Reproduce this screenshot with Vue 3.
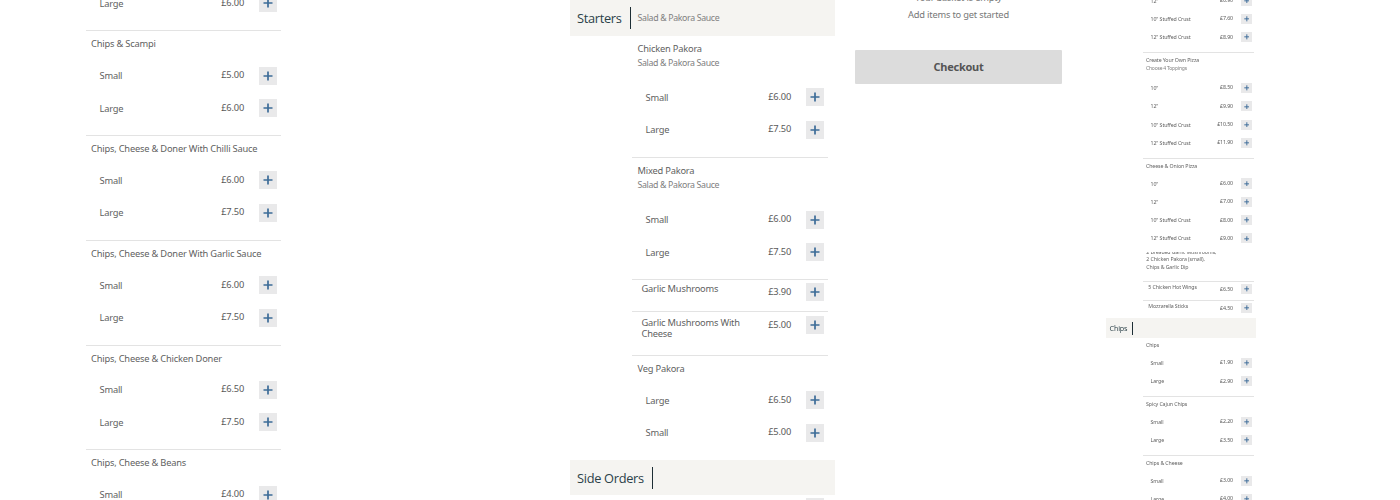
<template>
  <div class="page">
    <section v-for="col in columns" :key="col.id" class="col" :class="col.id">
      <template v-for="(item, i) in col.items" :key="i">
        <header v-if="item.head" class="head">
          <h2 class="head-title">{{ item.head }}</h2>
          <span v-if="item.sub" class="head-sub">{{ item.sub }}</span>
        </header>

        <div v-else-if="item.lines" class="deal">
          <p v-for="line in item.lines" :key="line">{{ line }}</p>
        </div>

        <div v-else-if="item.price" class="item single" :class="{ bare: item.bare, tall: item.tall }">
          <span class="single-name">{{ item.name }}</span>
          <span class="price">{{ item.price }}</span>
          <button class="add"><svg viewBox="0 0 10 10" width="10" height="10"><path d="M5 .5v9M.5 5h9" /></svg></button>
        </div>

        <div v-else class="item" :class="{ bare: item.bare }">
          <h3 v-if="item.name" class="name">{{ item.name }}</h3>
          <p v-if="item.sub" class="sub">{{ item.sub }}</p>
          <div v-for="row in item.rows" :key="row[0]" class="row">
            <span class="label">{{ row[0] }}</span>
            <span class="price">{{ row[1] }}</span>
            <button class="add"><svg viewBox="0 0 10 10" width="10" height="10"><path d="M5 .5v9M.5 5h9" /></svg></button>
          </div>
        </div>
      </template>
    </section>

    <aside class="cart">
      <p class="cart-title">Your basket is empty</p>
      <p class="cart-hint">Add items to get started</p>
      <button class="checkout">Checkout</button>
    </aside>

    <section class="col mini">
      <template v-for="(item, i) in miniItems" :key="i">
        <header v-if="item.head" class="head">
          <h2 class="head-title">{{ item.head }}</h2>
        </header>
        <div v-else-if="item.lines" class="deal">
          <p v-for="line in item.lines" :key="line">{{ line }}</p>
        </div>
        <div v-else-if="item.price" class="item single">
          <span class="single-name">{{ item.name }}</span>
          <span class="price">{{ item.price }}</span>
          <button class="add"><svg viewBox="0 0 10 10" width="10" height="10"><path d="M5 .5v9M.5 5h9" /></svg></button>
        </div>
        <div v-else class="item" :class="{ bare: item.bare }">
          <h3 v-if="item.name" class="name">{{ item.name }}</h3>
          <p v-if="item.sub" class="sub">{{ item.sub }}</p>
          <div v-for="row in item.rows" :key="row[0]" class="row">
            <span class="label">{{ row[0] }}</span>
            <span class="price">{{ row[1] }}</span>
            <button class="add"><svg viewBox="0 0 10 10" width="10" height="10"><path d="M5 .5v9M.5 5h9" /></svg></button>
          </div>
        </div>
      </template>
    </section>
  </div>
</template>

<script setup>
const columns = [
  {
    id: 'left',
    items: [
      { bare: true, rows: [['Large', '£6.00']] },
      { name: 'Chips & Scampi', rows: [['Small', '£5.00'], ['Large', '£6.00']] },
      { name: 'Chips, Cheese & Doner With Chilli Sauce', rows: [['Small', '£6.00'], ['Large', '£7.50']] },
      { name: 'Chips, Cheese & Doner With Garlic Sauce', rows: [['Small', '£6.00'], ['Large', '£7.50']] },
      { name: 'Chips, Cheese & Chicken Doner', rows: [['Small', '£6.50'], ['Large', '£7.50']] },
      { name: 'Chips, Cheese & Beans', rows: [['Small', '£4.00'], ['Large', '£5.00']] },
    ],
  },
  {
    id: 'middle',
    items: [
      { head: 'Starters', sub: 'Salad & Pakora Sauce' },
      { bare: true, name: 'Chicken Pakora', sub: 'Salad & Pakora Sauce', rows: [['Small', '£6.00'], ['Large', '£7.50']] },
      { name: 'Mixed Pakora', sub: 'Salad & Pakora Sauce', rows: [['Small', '£6.00'], ['Large', '£7.50']] },
      { name: 'Garlic Mushrooms', price: '£3.90' },
      { name: 'Garlic Mushrooms With Cheese', price: '£5.00', tall: true },
      { name: 'Veg Pakora', rows: [['Large', '£6.50'], ['Small', '£5.00']] },
      { head: 'Side Orders' },
      { bare: true, name: 'Onion Rings', price: '£2.50' },
    ],
  },
]

const miniItems = [
  { bare: true, rows: [['12"', '£6.90'], ['10" Stuffed Crust', '£7.60'], ['12" Stuffed Crust', '£8.90']] },
  { name: 'Create Your Own Pizza', sub: 'Choose 4 Toppings', rows: [['10"', '£8.50'], ['12"', '£9.90'], ['10" Stuffed Crust', '£10.50'], ['12" Stuffed Crust', '£11.90']] },
  { name: 'Cheese & Onion Pizza', rows: [['10"', '£6.00'], ['12"', '£7.00'], ['10" Stuffed Crust', '£8.00'], ['12" Stuffed Crust', '£9.00']] },
  { lines: ['2 Breaded Garlic Mushrooms,', '2 Chicken Pakora (small),', 'Chips & Garlic Dip'] },
  { name: '5 Chicken Hot Wings', price: '£6.50' },
  { name: 'Mozzarella Sticks', price: '£4.50' },
  { head: 'Chips' },
  { bare: true, name: 'Chips', rows: [['Small', '£1.90'], ['Large', '£2.90']] },
  { name: 'Spicy Cajun Chips', rows: [['Small', '£2.20'], ['Large', '£3.50']] },
  { name: 'Chips & Cheese', rows: [['Small', '£3.00'], ['Large', '£4.00']] },
]
</script>

<style>
html, body { margin: 0; background: #fff; }
</style>

<style scoped>
.page {
  display: flex;
  align-items: flex-start;
  height: 500px;
  overflow: hidden;
  font-family: "Noto Sans", "Open Sans", sans-serif;
  color: #555;
}
p, h2, h3 { margin: 0; font-weight: 400; }

.col { flex: none; }
.left { width: 195px; margin: -13px 0 0 86px; }
.left .name { padding-left: 5px; }
.middle { width: 265px; margin: 0 0 0 289px; }
.middle .item { margin: 0 7px 0 62px; }

.mini {
  zoom: 0.566;
  width: 265px;
  margin: -15px 0 0 77px;
  filter: blur(0.4px);
}
.mini .item { margin: 0 3px 0 66px; }
.mini .row { height: 32.3px; }
.mini .name { padding-bottom: 6px; }
.mini .sub { margin-top: -6px; padding-bottom: 10px; }
.mini .deal { height: 51px; margin-top: -2px; }
.mini .deal p:first-child { margin-top: -6px; }

.head {
  display: flex;
  align-items: center;
  height: 35.5px;
  background: #f5f4f1;
  padding-left: 7px;
}
.head-title {
  font-size: 12.8px;
  line-height: 22px;
  letter-spacing: -0.3px;
  color: #2b4149;
  padding-right: 8px;
  border-right: 1.5px solid #1d2e35;
  font-family: "Open Sans", sans-serif;
}
.head-sub {
  font-size: 8.8px;
  color: #808080;
  padding-left: 7px;
  letter-spacing: -0.35px;
}

.item {
  border-top: 1px solid #e3e3e3;
  padding-bottom: 10.75px;
}
.item.bare { border-top: 0; }
.name {
  font-size: 9.3px;
  line-height: 16px;
  letter-spacing: -0.2px;
  padding: 5px 0 7px 5.5px;
  color: #5f5f5f;
  white-space: nowrap;
}
.sub {
  font-size: 8.8px;
  line-height: 14px;
  letter-spacing: -0.35px;
  margin-top: -8px;
  padding: 0 0 11.5px 5.5px;
  color: #808080;
}
.row {
  display: flex;
  align-items: center;
  height: 32.5px;
  padding: 0 4px 0 13.5px;
}
.label { flex: 1; font-size: 9.3px; letter-spacing: -0.2px; color: #5f5f5f; }
.price { font-size: 9.3px; letter-spacing: -0.2px; color: #5a5a5a; margin: -2px 15px 0 0; }
.add {
  flex: none;
  display: flex;
  align-items: center;
  justify-content: center;
  width: 18px;
  height: 18px;
  padding: 0;
  border: 0;
  background: #e9e9ea;
}
.add svg { display: block; }
.add path { fill: none; stroke: #3d6c98; stroke-width: 1.7; }

.single {
  display: flex;
  align-items: flex-start;
  padding: 3px 4px 0 9.5px;
}
.single.tall { padding-top: 4px; }
.single-name {
  flex: 1;
  font-size: 9.3px;
  line-height: 11px;
  letter-spacing: -0.2px;
  padding: 0 20px 17px 0;
  color: #5f5f5f;
}
.tall .single-name { padding: 1px 20px 16px 0; }
.single .price { margin-top: 2px; }

.deal {
  overflow: hidden;
  margin: 0 3px 0 72px;
  font-size: 9.3px;
  line-height: 13px;
  letter-spacing: -0.2px;
  color: #666;
}

.cart {
  flex: none;
  width: 207px;
  margin: -11px 0 0 20px;
  text-align: center;
}
.cart-title, .cart-hint { font-size: 9.3px; line-height: 17px; letter-spacing: -0.2px; color: #777; }
.checkout {
  display: block;
  width: 100%;
  height: 34px;
  margin-top: 27px;
  padding: 0 0 2px;
  border: 0;
  border-radius: 1px;
  background: #dcdcdc;
  color: #555;
  font-family: "Noto Sans", sans-serif;
  font-size: 11px;
  font-weight: 700;
  letter-spacing: -0.25px;
}
</style>
